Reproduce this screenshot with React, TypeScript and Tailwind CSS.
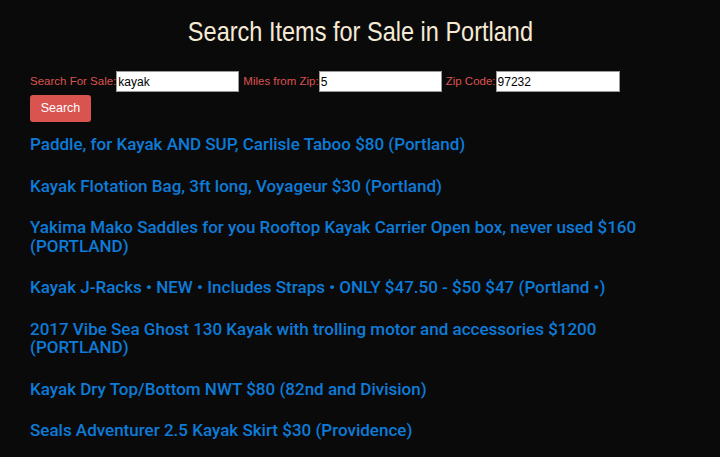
import React, { useState } from 'react';

const LISTINGS = [
  "Paddle, for Kayak AND SUP, Carlisle Taboo $80 (Portland)",
  "Kayak Flotation Bag, 3ft long, Voyageur $30 (Portland)",
  "Yakima Mako Saddles for you Rooftop Kayak Carrier Open box, never used $160 (PORTLAND)",
  "Kayak J-Racks • NEW • Includes Straps • ONLY $47.50 - $50 $47 (Portland •)",
  "2017 Vibe Sea Ghost 130 Kayak with trolling motor and accessories $1200 (PORTLAND)",
  "Kayak Dry Top/Bottom NWT $80 (82nd and Division)",
  "Seals Adventurer 2.5 Kayak Skirt $30 (Providence)",
];

export default function App() {
  const [query, setQuery] = useState("kayak");
  const [miles, setMiles] = useState("5");
  const [zip, setZip] = useState("97232");

  return (
    <div className="min-h-screen bg-[#0b0a0b] px-[30px] pt-[14px] font-['Liberation_Sans',Arial,sans-serif]">
      <h1 className="text-center text-[28px] leading-[36px] text-[#f6ead6] mb-[21px]">
        <span className="inline-block scale-x-84">Search Items for Sale in Portland</span>
      </h1>
      <form className="text-[11.5px]" onSubmit={(e) => e.preventDefault()}>
        <div className="flex items-center h-[21px]">
          <label className="text-[#dc534f]">Search For Sale:</label>
          <input value={query} onChange={(e) => setQuery(e.target.value)} className="w-[123px] h-[21px] bg-white text-black px-[1px] text-[12px] border border-[#999] outline-none" />
          <label className="text-[#dc534f] ml-[4px]">Miles from Zip:</label>
          <input value={miles} onChange={(e) => setMiles(e.target.value)} className="w-[123px] h-[21px] bg-white text-black px-[1px] text-[12px] border border-[#999] outline-none" />
          <label className="text-[#dc534f] ml-[4px]">Zip Code:</label>
          <input value={zip} onChange={(e) => setZip(e.target.value)} className="w-[124px] h-[21px] bg-white text-black px-[1px] text-[12px] border border-[#999] outline-none" />
        </div>
        <button type="submit" className="mt-[3px] w-[61px] h-[27px] rounded-[3px] bg-[#d9534f] text-white text-[12.5px]">Search</button>
      </form>
      <div className="mt-[13px] font-['Roboto',sans-serif]">
        {LISTINGS.map((item, i) => (
          <p key={i} className="text-[17px] leading-[18.5px] text-[#0d7bd8] font-medium mb-[23px] max-w-[640px]">{item}</p>
        ))}
      </div>
    </div>
  );
}
